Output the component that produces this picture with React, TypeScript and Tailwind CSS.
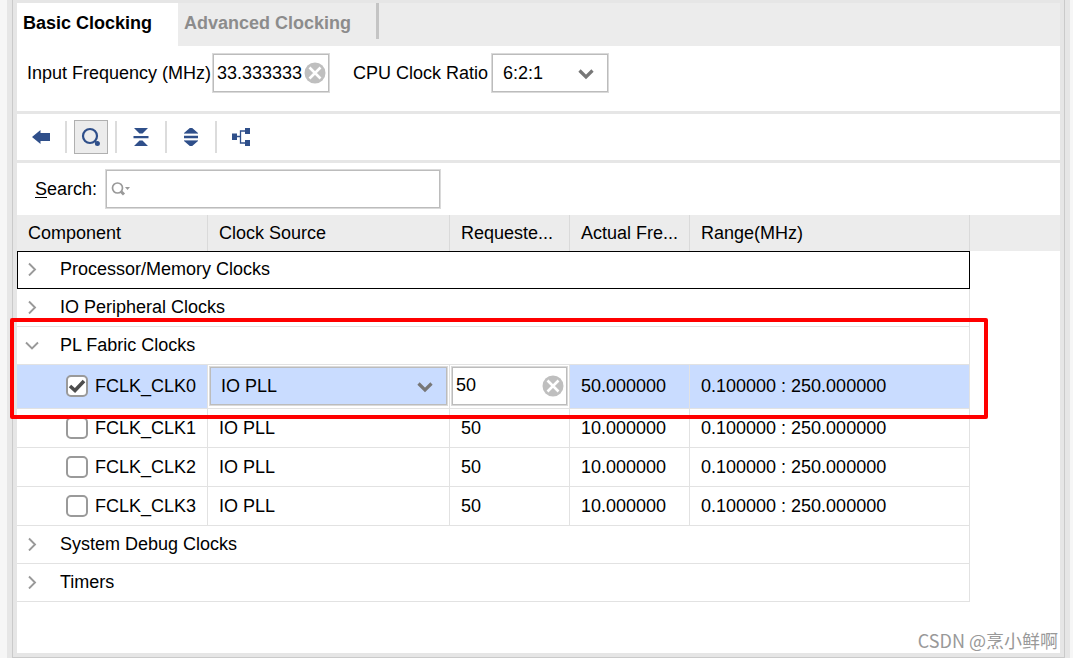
import React, { ReactNode, useState } from "react"

type ClockRow = { name: string; source: string; requested: string; actual: string; range: string }

const rows: ClockRow[] = [
  { name: "FCLK_CLK1", source: "IO PLL", requested: "50", actual: "10.000000", range: "0.100000 : 250.000000" },
  { name: "FCLK_CLK2", source: "IO PLL", requested: "50", actual: "10.000000", range: "0.100000 : 250.000000" },
  { name: "FCLK_CLK3", source: "IO PLL", requested: "50", actual: "10.000000", range: "0.100000 : 250.000000" },
]

const ClearIcon = () => (
  <svg width="22" height="22" viewBox="0 0 22 22">
    <circle cx="11" cy="11" r="10.5" fill="#bfbfbf" />
    <path d="M5.5 5.5l11 11M16.5 5.5l-11 11" stroke="#fff" strokeWidth="2.6" />
  </svg>
)

const DropIcon = () => (
  <svg
    className="pointer-events-none absolute right-[13px] top-1/2 -translate-y-1/2"
    width="20"
    height="20"
    viewBox="0 0 20 20"
  >
    <path d="M3.5 7.5l6.5 6.500L16.5 7.500" fill="none" stroke="#777" strokeWidth="3.2" />
  </svg>
)

const Chevron = ({ open }: { open?: boolean }) => (
  <svg width="14" height="14" viewBox="0 0 14 14" fill="none" stroke="#999" strokeWidth="1.9">
    {open ? <path d="M1 4.500l6 6 6-6" /> : <path d="M4 1.500l6 6-6 6" />}
  </svg>
)

const ClearableInput = ({ id, label, initial }: { id: string; label?: string; initial: string }) => {
  const [value, setValue] = useState(initial)

  return (
    <div className="flex h-10 w-full items-center border border-[#dadada] bg-white p-px inset-ring inset-ring-[#bcbcbc]">
      <input
        id={id}
        aria-label={label}
        className="h-full w-full min-w-0 pl-[3px] outline-none"
        value={value}
        onChange={(e) => setValue(e.target.value)}
      />
      <button type="button" aria-label="Clear" className="mr-[2px] shrink-0" onClick={() => setValue("")}>
        <ClearIcon />
      </button>
    </div>
  )
}

const Check = ({ id, checked }: { id: string; checked?: boolean }) => (
  <span className="relative flex h-[22px] w-[22px] shrink-0">
    <input
      id={id}
      type="checkbox"
      defaultChecked={checked}
      className="peer h-[22px] w-[22px] appearance-none rounded-[5px] border-2 border-[#9a9a9a] bg-white"
    />
    <svg
      className="pointer-events-none absolute inset-0 hidden peer-checked:block"
      width="22"
      height="22"
      viewBox="0 0 22 22"
    >
      <path d="M4 11l5 4.500L18 6" fill="none" stroke="#4d4d4d" strokeWidth="3.6" />
    </svg>
  </span>
)

const ToolButton = ({ label, active, children }: { label: string; active?: boolean; children: ReactNode }) => (
  <button
    type="button"
    aria-label={label}
    className={
      active
        ? "flex h-[34px] w-[34px] items-center justify-center border border-[#b0b0b0] bg-[#ececec]"
        : "flex h-[34px] w-[34px] items-center justify-center"
    }
  >
    <svg width="20" height="20" viewBox="0 0 20 20" fill="#2f4f8a">
      {children}
    </svg>
  </button>
)

const Divider = () => <span className="mx-[7px] h-8 w-[2px] bg-[#dcdcdc]" />

const GroupRow = ({ title, open, focused }: { title: string; open?: boolean; focused?: boolean }) => (
  <tr className="h-[38px]">
    <td
      colSpan={5}
      className={
        focused ? "border border-black p-0 pb-[2px] pl-[7px]" : "border-r border-b border-[#e2e2e2] p-0 pb-[1px] pl-2"
      }
    >
      <button type="button" aria-expanded={!!open} className="flex items-center gap-[21px]">
        <Chevron open={open} />
        {title}
      </button>
    </td>
    <td className="p-0" />
  </tr>
)

const cell = "border-r border-b border-[#e2e2e2] p-0 pl-[11px]"
const activeCell = "border-r border-b border-[#e2e2e2] bg-[#c9dcff] p-0 pb-[2px] pl-[11px]"
const head = "border-r border-[#dadada] p-0 pl-[11px] text-left font-normal"

const ClockTable = () => (
  <div className="relative">
    <table className="w-full table-fixed border-separate border-spacing-0">
      <colgroup>
        <col className="w-[191px]" />
        <col className="w-[242px]" />
        <col className="w-[120px]" />
        <col className="w-[120px]" />
        <col className="w-[280px]" />
        <col />
      </colgroup>
      <thead>
        <tr className="h-9 bg-[#ececec]">
          <th className={head}>Component</th>
          <th className={head}>Clock Source</th>
          <th className={head}>Requeste...</th>
          <th className={head}>Actual Fre...</th>
          <th className={head}>Range(MHz)</th>
          <th className="p-0" />
        </tr>
      </thead>
      <tbody>
        <GroupRow title="Processor/Memory Clocks" focused />
        <GroupRow title="IO Peripheral Clocks" />
        <GroupRow title="PL Fabric Clocks" open />
        <tr className="h-11">
          <td className="border-r border-b border-[#e2e2e2] bg-[#c9dcff] p-0 pb-[2px] pl-[49px]">
            <label htmlFor="clk0" className="flex items-center gap-[7px]">
              <Check id="clk0" checked />
              FCLK_CLK0
            </label>
          </td>
          <td className="border-r border-b border-[#e2e2e2] p-0 px-px pb-[2px]">
            <div className="relative">
              <select
                aria-label="FCLK_CLK0 clock source"
                className="h-10 w-full appearance-none border border-[#dadada] bg-[#c9dcff] pl-[11px] outline-none inset-ring inset-ring-[#bcbcbc]"
              >
                <option>IO PLL</option>
              </select>
              <DropIcon />
            </div>
          </td>
          <td className="border-r border-b border-[#e2e2e2] p-0 px-px pb-[2px]">
            <ClearableInput id="clk0-freq" label="FCLK_CLK0 requested frequency" initial="50" />
          </td>
          <td className={activeCell}>50.000000</td>
          <td className={activeCell}>0.100000 : 250.000000</td>
          <td className="p-0" />
        </tr>
        {rows.map((row) => (
          <tr key={row.name} className="h-[39px]">
            <td className="border-r border-b border-[#e2e2e2] p-0 pl-[49px]">
              <label htmlFor={row.name} className="flex items-center gap-[7px]">
                <Check id={row.name} />
                {row.name}
              </label>
            </td>
            <td className={cell}>{row.source}</td>
            <td className={cell}>{row.requested}</td>
            <td className={cell}>{row.actual}</td>
            <td className={cell}>{row.range}</td>
            <td className="p-0" />
          </tr>
        ))}
        <GroupRow title="System Debug Clocks" />
        <GroupRow title="Timers" />
      </tbody>
    </table>

    {/* highlight round the PL fabric group */}
    <div className="pointer-events-none absolute -left-[7px] top-[103px] h-[101px] w-[978px] rounded-[2px] border-4 border-[#ff0000]" />
  </div>
)

const App = () => {
  return (
    <div className="flex min-h-screen bg-[#f6f6f6] pl-[7px] pr-[3px] font-['Liberation_Sans',Arial,sans-serif] text-[18px] leading-6 text-black">
      <div className="flex flex-1 bg-[#e6e6e6] px-[5px]">
        <div className="flex flex-1 border-x border-b border-[#cacaca] px-1 pt-[3px] pb-1">
          <main className="relative flex flex-1 flex-col bg-white">
            <div role="tablist" className="flex h-[43px] items-start bg-[#ececec] font-bold">
              <button type="button" role="tab" aria-selected className="h-full w-[161px] bg-white pb-1 pl-[6px] text-left">
                Basic Clocking
              </button>
              <button
                type="button"
                role="tab"
                aria-selected={false}
                className="h-full w-[198px] pb-1 pl-[6px] text-left text-[#8c8c8c]"
              >
                Advanced Clocking
              </button>
              <span className="h-9 w-[3px] bg-[#c4c4c4]" />
            </div>

            <div className="flex items-start border-b-[3px] border-[#e6e6e6] pt-[7px] pb-[18px] pl-[10px]">
              <label htmlFor="input-freq" className="w-[185px] shrink-0 py-2 whitespace-nowrap">
                Input Frequency (MHz)
              </label>
              <div className="w-[118px] shrink-0">
                <ClearableInput id="input-freq" initial="33.333333" />
              </div>
              <label htmlFor="cpu-ratio" className="ml-[23px] w-[138px] shrink-0 py-2 whitespace-nowrap">
                CPU Clock Ratio
              </label>
              <div className="relative w-[118px]">
                <select
                  id="cpu-ratio"
                  className="h-10 w-full appearance-none border border-[#dadada] bg-white pl-[11px] outline-none inset-ring inset-ring-[#bcbcbc]"
                >
                  <option>6:2:1</option>
                </select>
                <DropIcon />
              </div>
            </div>

            <div role="toolbar" className="flex h-[49px] items-center border-b-[3px] border-[#e6e6e6] pl-[7px]">
              <ToolButton label="Back">
                <path d="M1 10l8.500-7v3H19v8H9.500v3z" />
              </ToolButton>
              <Divider />
              <ToolButton label="Search" active>
                <circle cx="9" cy="9" r="7" fill="none" stroke="#2f4f8a" strokeWidth="2.2" />
                <path d="M13.500 13.500l1.500 1.500" stroke="#2f4f8a" strokeWidth="2" />
                <circle cx="16.4" cy="16.4" r="2.5" />
              </ToolButton>
              <Divider />
              <ToolButton label="Collapse all">
                <path d="M3 1h14l-5.500 5.500h-3zM2.500 9h15v2.200h-15zM3 19h14l-5.500-5.500h-3z" />
              </ToolButton>
              <Divider />
              <ToolButton label="Expand all">
                <path d="M8.800 1h2.400L17 6H3zM3 8.800h14v2.400H3zM3 14h14l-5.800 5H8.800z" />
                <path d="M3 6h14v1H3zM3 13h14v1H3z" opacity="0.6" />
              </ToolButton>
              <Divider />
              <ToolButton label="Hierarchy">
                <path d="M1 6.500h5v6.500H1zM14 1h5v6h-5zM14 13h5v6h-5z" />
                <path d="M6 9.500h3.500M14 4H9.500v12H14" fill="none" stroke="#2f4f8a" strokeWidth="1.3" />
              </ToolButton>
            </div>

            <div className="flex items-center gap-2 py-[6px] pl-[18px]">
              <label htmlFor="search">
                <span className="underline underline-offset-2">S</span>earch:
              </label>
              <div className="flex h-10 w-[336px] items-center border border-[#dadada] bg-white pl-[5px] inset-ring inset-ring-[#bcbcbc]">
                <svg className="shrink-0" width="20" height="16" viewBox="0 0 20 16" fill="#999">
                  <circle cx="6.5" cy="7" r="5" fill="none" stroke="#999" strokeWidth="1.7" />
                  <path d="M10 10.500l3 3" stroke="#999" strokeWidth="3" />
                  <path d="M14 6h5l-2.500 3z" />
                </svg>
                <input id="search" className="h-full w-full min-w-0 pl-1 outline-none" />
              </div>
            </div>

            <ClockTable />

            <span className="absolute right-[2px] bottom-0 font-['Noto_Sans_CJK_SC',sans-serif] leading-[26px] text-[#999]">
              CSDN @烹小鲜啊
            </span>
          </main>
        </div>
      </div>
    </div>
  )
}

export default App
